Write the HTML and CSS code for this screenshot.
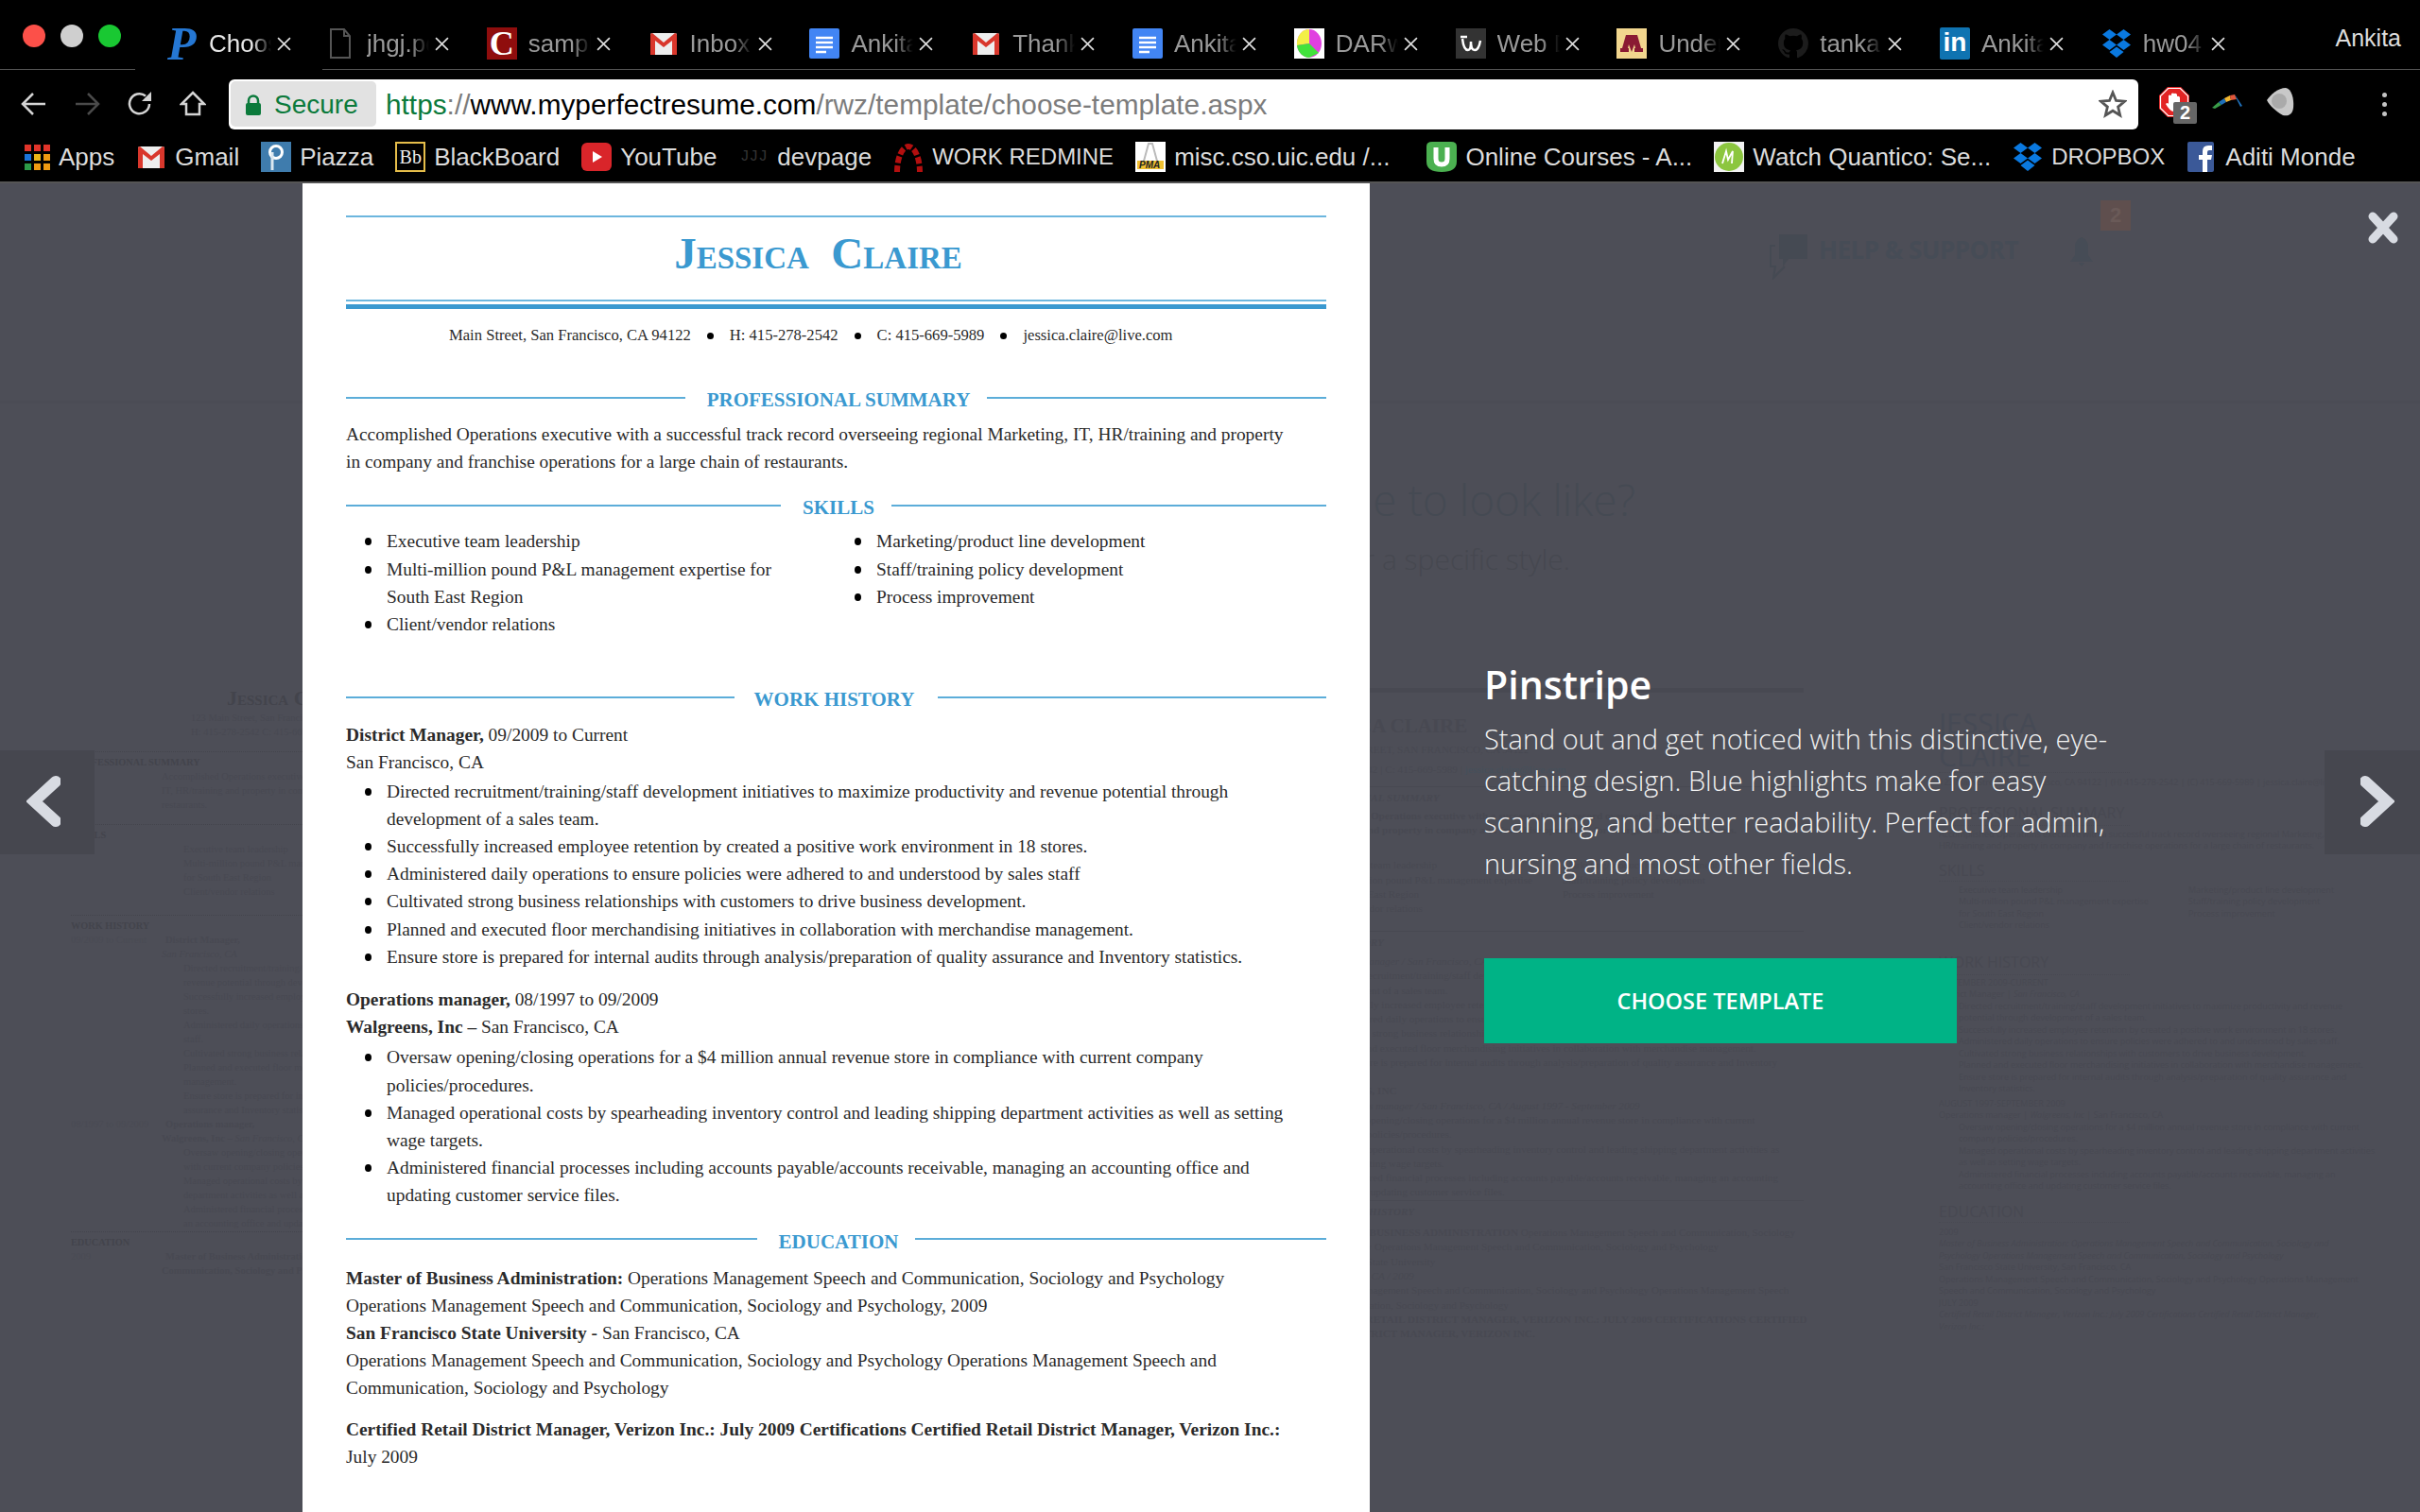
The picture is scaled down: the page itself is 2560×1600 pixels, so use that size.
FILE: index.html
```html
<!DOCTYPE html>
<html lang="en">
<head>
  <meta charset="UTF-8">
  <title>Choose Template</title>
  <link rel="stylesheet" href="styles.css">
</head>
<body>
  <!-- Browser chrome -->
  <header class="chrome">
    <div class="tabbar">
      <div class="lights">
        <span class="light red"></span>
        <span class="light grey"></span>
        <span class="light green"></span>
      </div>
      <div class="tab active">
        <span class="ico ico-p">P</span>
        <span class="tab-title">Choose</span>
        <svg class="tab-x" viewBox="0 0 14 14"><path d="M1 1L13 13M13 1L1 13"/></svg>
      </div>
      <div class="tab">
        <svg class="ico" viewBox="0 0 32 32"><path d="M8 1H20L26 8V31H6V1Z M20 1V8H26" fill="none" stroke="#555" stroke-width="2"/></svg>
        <span class="tab-title">jhgj.pdf</span>
        <svg class="tab-x" viewBox="0 0 14 14"><path d="M1 1L13 13M13 1L1 13"/></svg>
      </div>
      <div class="tab">
        <span class="ico ico-c">C</span>
        <span class="tab-title">sample</span>
        <svg class="tab-x" viewBox="0 0 14 14"><path d="M1 1L13 13M13 1L1 13"/></svg>
      </div>
      <div class="tab">
        <svg class="ico" viewBox="0 0 32 32"><use href="#gmail"/></svg>
        <span class="tab-title">Inbox</span>
        <svg class="tab-x" viewBox="0 0 14 14"><path d="M1 1L13 13M13 1L1 13"/></svg>
      </div>
      <div class="tab">
        <svg class="ico" viewBox="0 0 32 32"><use href="#docs"/></svg>
        <span class="tab-title">Ankita</span>
        <svg class="tab-x" viewBox="0 0 14 14"><path d="M1 1L13 13M13 1L1 13"/></svg>
      </div>
      <div class="tab">
        <svg class="ico" viewBox="0 0 32 32"><use href="#gmail"/></svg>
        <span class="tab-title">Thanks</span>
        <svg class="tab-x" viewBox="0 0 14 14"><path d="M1 1L13 13M13 1L1 13"/></svg>
      </div>
      <div class="tab">
        <svg class="ico" viewBox="0 0 32 32"><use href="#docs"/></svg>
        <span class="tab-title">Ankita</span>
        <svg class="tab-x" viewBox="0 0 14 14"><path d="M1 1L13 13M13 1L1 13"/></svg>
      </div>
      <div class="tab">
        <svg class="ico" viewBox="0 0 32 32">
          <rect width="32" height="32" fill="#fff"/>
          <ellipse cx="16" cy="16" rx="13" ry="15" fill="#e040e0"/>
          <path d="M16 1A13 15 0 0 0 3 18L16 16Z" fill="#f3f046"/>
          <path d="M3 18A13 15 0 0 0 16 31L26 26L16 16Z" fill="#41e23c"/>
        </svg>
        <span class="tab-title">DARwin</span>
        <svg class="tab-x" viewBox="0 0 14 14"><path d="M1 1L13 13M13 1L1 13"/></svg>
      </div>
      <div class="tab">
        <svg class="ico" viewBox="0 0 32 32">
          <rect width="32" height="32" fill="#333"/>
          <path d="M7 11C8 20 10 23 13 23C15 23 16 19 16 14C16 19 17 23 20 23C23 23 25 19 26 13M5 9H12" fill="none" stroke="#fff" stroke-width="2.5"/>
        </svg>
        <span class="tab-title">Web Dev</span>
        <svg class="tab-x" viewBox="0 0 14 14"><path d="M1 1L13 13M13 1L1 13"/></svg>
      </div>
      <div class="tab">
        <svg class="ico" viewBox="0 0 32 32">
          <rect width="32" height="32" fill="#f2d68e"/>
          <path d="M4 25V21H6L10 7H22L26 21H28V25H19V21H20L19 17L16 25L13 17L12 21H13V25Z" fill="#8a1a33"/>
        </svg>
        <span class="tab-title">Under</span>
        <svg class="tab-x" viewBox="0 0 14 14"><path d="M1 1L13 13M13 1L1 13"/></svg>
      </div>
      <div class="tab">
        <svg class="ico" viewBox="0 0 16 16"><path fill="#1c1c1c" d="M8 0C3.58 0 0 3.58 0 8c0 3.54 2.29 6.53 5.47 7.59.4.07.55-.17.55-.38 0-.19-.01-.82-.01-1.49-2.01.37-2.53-.49-2.69-.94-.09-.23-.48-.94-.82-1.13-.28-.15-.68-.52-.01-.53.63-.01 1.08.58 1.23.82.72 1.21 1.87.87 2.33.66.07-.52.28-.87.51-1.07-1.78-.2-3.64-.89-3.64-3.95 0-.87.31-1.59.82-2.15-.08-.2-.36-1.02.08-2.12 0 0 .67-.21 2.2.82.64-.18 1.32-.27 2-.27s1.36.09 2 .27c1.53-1.04 2.2-.82 2.2-.82.44 1.1.16 1.92.08 2.12.51.56.82 1.27.82 2.15 0 3.07-1.87 3.75-3.65 3.95.29.25.54.73.54 1.48 0 1.07-.01 1.93-.01 2.2 0 .21.15.46.55.38A8.01 8.01 0 0 0 16 8c0-4.42-3.58-8-8-8z"/></svg>
        <span class="tab-title">tanka</span>
        <svg class="tab-x" viewBox="0 0 14 14"><path d="M1 1L13 13M13 1L1 13"/></svg>
      </div>
      <div class="tab">
        <span class="ico ico-in">in</span>
        <span class="tab-title">Ankita</span>
        <svg class="tab-x" viewBox="0 0 14 14"><path d="M1 1L13 13M13 1L1 13"/></svg>
      </div>
      <div class="tab">
        <svg class="ico" viewBox="0 0 32 32"><use href="#dropbox"/></svg>
        <span class="tab-title">hw04</span>
        <svg class="tab-x" viewBox="0 0 14 14"><path d="M1 1L13 13M13 1L1 13"/></svg>
      </div>
      <span class="profile">Ankita</span>
    </div>

    <div class="toolbar">
      <div class="nav-btns">
        <svg class="nav-ico" viewBox="0 0 28 28"><path d="M26 14H3M13 3L2 14L13 25"/></svg>
        <svg class="nav-ico dim" viewBox="0 0 28 28"><path d="M2 14H25M15 3L26 14L15 25"/></svg>
        <svg class="nav-ico" viewBox="0 0 28 28"><path d="M24 14A10.500 10.500 0 1 1 20 5.500"/><path class="solid" d="M26 1V11H16Z"/></svg>
        <svg class="nav-ico" viewBox="0 0 28 28"><path d="M14 2L26 14H21V25H7V14H2Z"/></svg>
      </div>
      <div class="omnibox">
        <div class="secure">
          <svg class="lock" viewBox="0 0 16 22"><path d="M3 10V6.500A5 5 0 0 1 13 6.500V10" fill="none" stroke="#0b7a3b" stroke-width="2.500"/><rect y="9" width="16" height="13" rx="2" fill="#0b7a3b"/></svg>
          <span>Secure</span>
        </div>
        <div class="url"><span class="scheme">https</span><span class="path">://</span><span class="host">www.myperfectresume.com</span><span class="path">/rwz/template/choose-template.aspx</span></div>
        <svg class="star" viewBox="0 0 30 30"><path d="M15 3L18.500 11.500L27.500 12.200L20.600 18.100L22.700 27L15 22.200L7.300 27L9.400 18.100L2.500 12.200L11.500 11.500Z"/></svg>
      </div>
      <div class="extensions">
        <div class="ext-stop">
          <svg viewBox="0 0 32 32" class="ext-ico">
            <path d="M9 0H23L32 9V23L23 32H9L0 23V9Z" fill="#e32424"/>
            <path d="M1.500 9.600L9.600 1.500H22.400L30.500 9.600V22.400L22.400 30.500H9.600L1.500 22.400Z" fill="none" stroke="#fff" stroke-width="1.200"/>
            <path d="M10 16V9Q11.500 8 13 9V7Q14.500 6 16 7V7Q17.500 6 19 8V10Q20.500 9 22 11V20Q21 26 15 26Q11 25 7 18Q9 16 10 18Z" fill="#fff"/>
          </svg>
          <span class="ext-badge">2</span>
        </div>
        <svg class="ext-bow" viewBox="0 0 32 16">
          <path d="M0 15L7 9L10 12L3 16Z" fill="#3a9d4a"/>
          <path d="M7 9L13 5L15 9L10 12Z" fill="#1f6fb8"/>
          <path d="M13 5L19 2L20 7L15 9Z" fill="#f2b631"/>
          <path d="M19 2L24 1L26 6L20 7Z" fill="#e2573a"/>
          <path d="M24 1L32 13L30 14L26 6Z" fill="#1f6fb8"/>
        </svg>
        <svg class="ext-cloud" viewBox="0 0 32 32">
          <path d="M2 14C6 8 14 1 22 1C28 2 31 12 30 22C29 30 24 31 19 30C12 26 5 20 2 14Z" fill="#c8c8c8"/>
          <circle cx="15" cy="15" r="8" fill="#aaa"/>
        </svg>
        <div class="dots"><i></i><i></i><i></i></div>
      </div>
    </div>

    <div class="bookmarks">
      <div class="bm">
        <div class="apps-grid">
          <i class="c1"></i><i class="c1"></i><i class="c1"></i>
          <i class="c2"></i><i class="c3"></i><i class="c4"></i>
          <i class="c5"></i><i class="c4"></i><i class="c4"></i>
        </div>
        <span>Apps</span>
      </div>
      <div class="bm"><svg class="ico" viewBox="0 0 32 32"><use href="#gmail"/></svg><span>Gmail</span></div>
      <div class="bm">
        <svg class="ico" viewBox="0 0 32 32"><rect width="32" height="32" fill="#3f7cad"/><circle cx="16" cy="11" r="6.500" fill="none" stroke="#fff" stroke-width="3"/><path d="M12 11V30" stroke="#dce8f0" stroke-width="3"/></svg>
        <span>Piazza</span>
      </div>
      <div class="bm">
        <span class="ico ico-bb">Bb</span>
        <span>BlackBoard</span>
      </div>
      <div class="bm">
        <svg class="ico" viewBox="0 0 32 32"><rect y="1" width="32" height="30" rx="6" fill="#d9252a"/><path d="M12 10L22 16L12 22Z" fill="#fff"/></svg>
        <span>YouTube</span>
      </div>
      <div class="bm">
        <span class="ico ico-dev">JJJ</span>
        <span>devpage</span>
      </div>
      <div class="bm caps">
        <svg class="ico" viewBox="0 0 32 32"><path d="M4 32A12 27 0 0 1 28 32" fill="none" stroke="#b30f0f" stroke-width="6" stroke-dasharray="7 2.500"/></svg>
        <span>WORK REDMINE</span>
      </div>
      <div class="bm bm-wide">
        <svg class="ico" viewBox="0 0 32 32"><rect width="32" height="32" fill="#fff"/><path d="M8 24L14 2H18L24 24" fill="none" stroke="#bbb" stroke-width="2"/><rect x="2" y="20" width="28" height="9" fill="#f0c030"/><text x="4" y="28" class="pma">PMA</text></svg>
        <span>misc.cso.uic.edu /...</span>
      </div>
      <div class="bm">
        <svg class="ico" viewBox="0 0 32 32"><path d="M0 5Q0 0 6 0H26Q32 0 32 5V21Q32 32 16 32Q0 32 0 21Z" fill="#4bb050"/><path d="M10 6V18Q10 24 16 24Q22 24 22 18V6" fill="none" stroke="#fff" stroke-width="5"/></svg>
        <span>Online Courses - A...</span>
      </div>
      <div class="bm">
        <svg class="ico" viewBox="0 0 32 32"><rect width="32" height="32" fill="#f2f2f2"/><circle cx="16" cy="16" r="15" fill="#8cc63f"/><path d="M9 23L13 10L15 19L20 10L19 23" fill="none" stroke="#fff" stroke-width="1.800"/></svg>
        <span>Watch Quantico: Se...</span>
      </div>
      <div class="bm caps">
        <svg class="ico" viewBox="0 0 32 32"><use href="#dropbox"/></svg>
        <span>DROPBOX</span>
      </div>
      <div class="bm">
        <svg class="ico" viewBox="0 0 32 32"><rect x="1" width="28" height="32" rx="2" fill="#3b5998"/><path d="M22 32V19H26L27 14H22V11Q22 9 24 9H27V4H23Q17 4 17 10V14H13V19H17V32Z" fill="#fff"/></svg>
        <span>Aditi Monde</span>
      </div>
    </div>
  </header>

  <!-- Shared icons -->
  <svg class="defs" aria-hidden="true">
    <symbol id="gmail" viewBox="0 0 32 32">
      <rect x="2" y="5" width="28" height="23" rx="2" fill="#eee"/>
      <path d="M2 28V7Q2 5 4 5L16 15L28 5Q30 5 30 7V28H25V13L16 20L7 13V28Z" fill="#d9372c"/>
    </symbol>
    <symbol id="docs" viewBox="0 0 32 32">
      <rect width="32" height="32" rx="2" fill="#4285f4"/>
      <path d="M7 10H25M7 15H25M7 20H25M7 25H18" stroke="#fff" stroke-width="2.500"/>
    </symbol>
    <symbol id="dropbox" viewBox="0 0 32 32">
      <path d="M8.500 1L16 6.500L8.500 12L1 6.500Z M23.500 1L31 6.500L23.500 12L16 6.500Z M8.500 12L16 17.500L8.500 23L1 17.500Z M23.500 12L31 17.500L23.500 23L16 17.500Z M16 19.500L23.500 25L16 31L8.500 25Z" fill="#0a79e0"/>
    </symbol>
  </svg>

  <!-- Modal over the dimmed page -->
  <main class="stage">
    <div class="behind">
      <div class="ghost-top">
        <svg class="ghost-chat" viewBox="0 0 44 50"><path d="M12 2H42V28H22L16 36V28H12Z" fill="#454a53"/><path d="M8 14H3V36H8L6 48L18 36" fill="none" stroke="#454a53" stroke-width="2"/></svg>
        <span class="ghost-help">HELP &amp; SUPPORT</span>
        <svg class="ghost-bell" viewBox="0 0 32 32"><path d="M16 1Q22 3 23 10V20L28 27H4L9 20V10Q10 3 16 1ZM13 28H19L16 32Z" fill="#464c56"/></svg>
        <span class="ghost-badge">2</span>
      </div>
      <div class="ghost-rule"></div>
      <div class="ghost-title">your resume to look like?</div>
      <div class="ghost-sub">Or search for a specific style.</div>

      <div class="sheet sheet-left">
        <div class="sl-name">Jessica Claire</div>
        <div class="sl-center">123 Main Street, San Francisco, CA 94122</div>
        <div class="sl-center">H: 415-278-2542 C: 415-669-5989</div>
        <h4 class="sl-head">PROFESSIONAL SUMMARY</h4>
        <p class="sl-body">Accomplished Operations executive with a successful</p>
        <p class="sl-body">IT, HR/training and property in company and franchise</p>
        <p class="sl-body">restaurants.</p>
        <h4 class="sl-head">SKILLS</h4>
        <ul class="sl-list">
          <li>Executive team leadership</li>
          <li>Multi-million pound P&amp;L management expertise</li>
          <li class="cont">for South East Region</li>
          <li>Client/vendor relations</li>
        </ul>
        <h4 class="sl-head sl-work">WORK HISTORY</h4>
        <p class="sl-date"><span>09/2009 to Current</span><b>District Manager,</b></p>
        <p class="sl-body"><i>San Francisco, CA</i></p>
        <ul class="sl-list">
          <li>Directed recruitment/training/staff development</li>
          <li class="cont">revenue potential through development of a sales</li>
          <li>Successfully increased employee retention by</li>
          <li class="cont">stores.</li>
          <li>Administered daily operations to ensure policies</li>
          <li class="cont">staff.</li>
          <li>Cultivated strong business relationships with</li>
          <li>Planned and executed floor merchandising</li>
          <li class="cont">management.</li>
          <li>Ensure store is prepared for internal audits</li>
          <li class="cont">assurance and Inventory statistics.</li>
        </ul>
        <p class="sl-date"><span>08/1997 to 09/2009</span><b>Operations manager,</b></p>
        <p class="sl-body"><b>Walgreens, Inc –</b> <i>San Francisco, CA</i></p>
        <ul class="sl-list">
          <li>Oversaw opening/closing operations for a $4</li>
          <li class="cont">with current company policies/procedures.</li>
          <li>Managed operational costs by spearheading</li>
          <li class="cont">department activities as well as setting wage</li>
          <li>Administered financial processes including</li>
          <li class="cont">an accounting office and updating customer</li>
        </ul>
        <h4 class="sl-head sl-edu">EDUCATION</h4>
        <p class="sl-date"><span>2009</span><b>Master of Business Administration:</b></p>
        <p class="sl-body"><b>Communication, Sociology and Psychology</b></p>
      </div>

      <div class="sheet sheet-mid">
        <div class="sm-bar"></div>
        <div class="sm-name">JESSICA CLAIRE</div>
        <div class="sm-addr">123 MAIN STREET, SAN FRANCISCO, CA 94122</div>
        <div class="sm-phone">H: 415-278-2542 | C: 415-669-5989 | <span class="sm-mail">jessica.claire@live.com</span></div>
        <div class="sm-rule"></div>
        <div class="sm-head"><b><i>PROFESSIONAL SUMMARY</i></b></div>
        <div class="sm-summary"><b>Accomplished Operations executive with a successful track record overseeing regional IT,</b></div>
        <div><b>HR/training and property in company and franchise operations for a large chain of restaurants.</b></div>
        <div class="sm-cols">
          <div>
            <div class="sm-item">Executive team leadership</div>
            <div class="sm-item">Multi-million pound P&amp;L management expertise</div>
            <div class="sm-item">for South East Region</div>
            <div class="sm-item">Client/vendor relations</div>
          </div>
          <div>
            <div class="sm-item">Marketing/product line development</div>
            <div class="sm-item">Staff/training policy development</div>
            <div class="sm-item">Process improvement</div>
          </div>
        </div>
        <div class="sm-rule sm-rule-low"></div>
        <div class="sm-head"><b><i>WORK HISTORY</i></b></div>
        <div class="sm-role"><i>District Manager / San Francisco, CA / September 2009 - Current</i></div>
        <div class="sm-item">Directed recruitment/training/staff development initiatives to maximize</div>
        <div class="sm-item">development of a sales team.</div>
        <div class="sm-item">Successfully increased employee retention by created a positive work</div>
        <div class="sm-item">Administered daily operations to ensure policies were adhered to</div>
        <div class="sm-item">Cultivated strong business relationships with customers</div>
        <div class="sm-item">Planned and executed floor merchandising initiatives in collaboration with merchandise management.</div>
        <div class="sm-item">Ensure store is prepared for internal audits through analysis/preparation of quality assurance and Inventory</div>
        <div class="sm-head sm-company"><b>WALGREENS, INC</b></div>
        <div class="sm-item"><i>Operations manager / San Francisco, CA / August 1997 - September 2009</i></div>
        <div class="sm-item">Oversaw opening/closing operations for a $4 million annual revenue store in compliance with current</div>
        <div class="sm-item">company policies/procedures.</div>
        <div class="sm-item">Managed operational costs by spearheading inventory control and leading shipping department activities as</div>
        <div class="sm-item">well as setting wage targets.</div>
        <div class="sm-item">Administered financial processes including accounts payable/accounts receivable, managing an accounting</div>
        <div class="sm-item">office and updating customer service files.</div>
        <div class="sm-rule sm-rule-tight"></div>
        <div class="sm-head"><b><i>EDUCATION HISTORY</i></b></div>
        <div class="sm-degree"><b>MASTER OF BUSINESS ADMINISTRATION</b> Operations Management Speech and Communication, Sociology</div>
        <div>and Psychology Operations Management Speech and Communication, Sociology and Psychology</div>
        <div>San Francisco State University</div>
        <div><i>San Francisco, CA / 2009</i></div>
        <div>Operations Management Speech and Communication, Sociology and Psychology Operations Management Speech</div>
        <div>and Communication, Sociology and Psychology</div>
        <div><b>CERTIFIED RETAIL DISTRICT MANAGER, VERIZON INC.: JULY 2009 CERTIFICATIONS CERTIFIED</b></div>
        <div><b>RETAIL DISTRICT MANAGER, VERIZON INC.</b></div>
      </div>

      <div class="sheet sheet-right">
        <div class="sr-name">JESSICA<br>CLAIRE</div>
        <div class="sr-contact">123 Main Street, San Francisco, CA 94122 | (H) 415-278-2542 | (C) 415-669-5989 | jessica.claire@live.com</div>
        <div class="sr-head">PROFESSIONAL SUMMARY</div>
        <div>Accomplished Operations executive with a successful track record overseeing regional Marketing, IT,</div>
        <div>HR/training and property in company and franchise operations for a large chain of restaurants.</div>
        <div class="sr-head sr-skills">SKILLS</div>
        <div class="sr-cols">
          <div>
            <div class="sr-item">Executive team leadership</div>
            <div class="sr-item">Multi-million pound P&amp;L management expertise</div>
            <div class="sr-item">for South East Region</div>
            <div class="sr-item">Client/vendor relations</div>
          </div>
          <div>
            <div class="sr-item">Marketing/product line development</div>
            <div class="sr-item">Staff/training policy development</div>
            <div class="sr-item">Process improvement</div>
          </div>
        </div>
        <div class="sr-head sr-work">WORK HISTORY</div>
        <div>SEPTEMBER 2009-CURRENT</div>
        <div>District Manager | <i>San Francisco, CA</i></div>
        <div class="sr-item">Directed recruitment/training/staff development initiatives to maximize productivity and revenue</div>
        <div class="sr-item">potential through development of a sales team.</div>
        <div class="sr-item">Successfully increased employee retention by created a positive work environment in 18 stores.</div>
        <div class="sr-item">Administered daily operations to ensure policies were adhered to and understood by sales staff.</div>
        <div class="sr-item">Cultivated strong business relationships with customers to drive business development.</div>
        <div class="sr-item">Planned and executed floor merchandising initiatives in collaboration with merchandise management.</div>
        <div class="sr-item">Ensure store is prepared for internal audits through analysis/preparation of quality assurance and</div>
        <div class="sr-item">Inventory statistics.</div>
        <div class="sr-job">AUGUST 1997-SEPTEMBER 2009</div>
        <div>Operations manager | <i>Walgreens, Inc</i> | San Francisco, CA</div>
        <div class="sr-item">Oversaw opening/closing operations for a $4 million annual revenue store in compliance with current</div>
        <div class="sr-item">company policies/procedures.</div>
        <div class="sr-item">Managed operational costs by spearheading inventory control and leading shipping department activities</div>
        <div class="sr-item">as well as setting wage targets.</div>
        <div class="sr-item">Administered financial processes including accounts payable/accounts receivable, managing an</div>
        <div class="sr-item">accounting office and updating customer service files.</div>
        <div class="sr-head sr-edu">EDUCATION</div>
        <div>2009</div>
        <div><i>Master of Business Administration: Operations Management Speech and Communication, Sociology and</i></div>
        <div><i>Psychology Operations Management Speech and Communication, Sociology and Psychology</i></div>
        <div>San Francisco State University, San Francisco, CA</div>
        <div>Operations Management Speech and Communication, Sociology and Psychology Operations Management</div>
        <div>Speech and Communication, Sociology and Psychology</div>
        <div>JULY 2009</div>
        <div><i>Certified Retail District Manager, Verizon Inc.: July 2009 Certifications Certified Retail District Manager,</i></div>
        <div><i>Verizon Inc.:</i></div>
      </div>
    </div>

    <div class="modal">
      <article class="paper">
        <div class="rule-top"></div>
        <h1 class="res-name">Jessica&nbsp; Claire</h1>
        <div class="rule-double"></div>
        <div class="contact">
          <span>Main Street, San Francisco, CA 94122</span>
          <i class="dot"></i>
          <span>H: 415-278-2542</span>
          <i class="dot"></i>
          <span>C: 415-669-5989</span>
          <i class="dot"></i>
          <span>jessica.claire@live.com</span>
        </div>

        <h2 class="sec-head first"><span>PROFESSIONAL SUMMARY</span></h2>
        <p class="sec-text">Accomplished Operations executive with a successful track record overseeing regional Marketing, IT, HR/training and property<br>in company and franchise operations for a large chain of restaurants.</p>

        <h2 class="sec-head skills"><span>SKILLS</span></h2>
        <div class="skill-cols">
          <ul class="res-list">
            <li>Executive team leadership</li>
            <li>Multi-million pound P&amp;L management expertise for South East Region</li>
            <li>Client/vendor relations</li>
          </ul>
          <ul class="res-list">
            <li>Marketing/product line development</li>
            <li>Staff/training policy development</li>
            <li>Process improvement</li>
          </ul>
        </div>

        <h2 class="sec-head work"><span>WORK HISTORY</span></h2>
        <p class="sec-text job"><b>District Manager,</b> 09/2009 to Current<br>San Francisco, CA</p>
        <ul class="res-list">
          <li>Directed recruitment/training/staff development initiatives to maximize productivity and revenue potential through development of a sales team.</li>
          <li>Successfully increased employee retention by created a positive work environment in 18 stores.</li>
          <li>Administered daily operations to ensure policies were adhered to and understood by sales staff</li>
          <li>Cultivated strong business relationships with customers to drive business development.</li>
          <li>Planned and executed floor merchandising initiatives in collaboration with merchandise management.</li>
          <li>Ensure store is prepared for internal audits through analysis/preparation of quality assurance and Inventory statistics.</li>
        </ul>
        <p class="sec-text job second"><b>Operations manager,</b> 08/1997 to 09/2009<br><b>Walgreens, Inc –</b> San Francisco, CA</p>
        <ul class="res-list second-list">
          <li>Oversaw opening/closing operations for a $4 million annual revenue store in compliance with current company policies/procedures.</li>
          <li>Managed operational costs by spearheading inventory control and leading shipping department activities as well as setting wage targets.</li>
          <li>Administered financial processes including accounts payable/accounts receivable, managing an accounting office and updating customer service files.</li>
        </ul>

        <h2 class="sec-head edu"><span>EDUCATION</span></h2>
        <p class="sec-text edu-text"><b>Master of Business Administration:</b> Operations Management Speech and Communication, Sociology and Psychology<br>Operations Management Speech and Communication, Sociology and Psychology, 2009<br><b>San Francisco State University -</b> San Francisco, CA<br>Operations Management Speech and Communication, Sociology and Psychology Operations Management Speech and<br>Communication, Sociology and Psychology</p>
        <p class="sec-text cert"><b>Certified Retail District Manager, Verizon Inc.: July 2009 Certifications Certified Retail District Manager, Verizon Inc.:</b><br>July 2009</p>
      </article>

      <section class="info">
        <h3 class="info-title">Pinstripe</h3>
        <p class="info-text">Stand out and get noticed with this distinctive, eye-catching design. Blue highlights make for easy scanning, and better readability. Perfect for admin, nursing and most other fields.</p>
        <button class="choose-btn">CHOOSE TEMPLATE</button>
      </section>
    </div>

    <div class="arrow arrow-left"><svg viewBox="0 0 36 54"><path d="M31 6L8 27L31 48"/></svg></div>
    <div class="arrow arrow-right"><svg viewBox="0 0 36 54"><path d="M5 6L28 27L5 48"/></svg></div>
    <svg class="close" viewBox="0 0 34 34"><path d="M6 5L28 29M28 5L6 29"/></svg>
  </main>
</body>
</html>
```

FILE: styles.css
```css
* {
  margin: 0;
  padding: 0;
  box-sizing: border-box;
}
html, body {
  width: 2560px;
  height: 1600px;
  overflow: hidden;
}
body {
  font-family: "Liberation Sans", Arial, sans-serif;
  background-color: #000;
}
.defs {
  position: absolute;
  width: 0;
  height: 0;
}

/* Browser chrome */
.chrome {
  height: 194px;
  background-color: #000;
  border-bottom: 2px solid #555;
}
.tabbar {
  display: flex;
  height: 74px;
  border-bottom: 1px solid #555;
}
.lights {
  display: flex;
  gap: 16px;
  width: 143px;
  padding: 26px 0 0 24px;
}
.light {
  width: 24px;
  height: 24px;
  border-radius: 50%;
}
.light.red { background-color: #fc5049; }
.light.grey { background-color: #cfcfcf; }
.light.green { background-color: #19c832; }
.tab {
  display: flex;
  align-items: center;
  flex: none;
  width: 170.8px;
  height: 74px;
  padding: 18px 0 0 3px;
}
.tab.active {
  width: 198px;
  padding-left: 34px;
  background-color: #000;
}
.ico {
  display: block;
  flex: none;
  width: 32px;
  height: 32px;
}
.tab .ico {
  height: 34px;
}
.tab-title {
  width: 66px;
  margin-left: 12px;
  overflow: hidden;
  white-space: nowrap;
  font-size: 26px;
  color: #9a9a9a;
  -webkit-mask-image: linear-gradient(to right, #000 70%, transparent 100%);
  mask-image: linear-gradient(to right, #000 70%, transparent 100%);
}
.tab.active .tab-title {
  color: #e8e8e8;
}
.tab-x {
  flex: none;
  width: 15px;
  height: 15px;
  margin: 1px 0 0 6px;
  fill: none;
  stroke: #ddd;
  stroke-width: 1.6;
}
.ico-p {
  font-family: "Liberation Serif", serif;
  font-style: italic;
  font-weight: bold;
  font-size: 50px;
  line-height: 34px;
  color: #2577d3;
}
.ico-c {
  font-family: "Liberation Serif", serif;
  font-weight: bold;
  font-size: 36px;
  line-height: 34px;
  text-align: center;
  color: #fff;
  background-color: #8f0d0d;
}
.ico-in {
  height: 32px;
  font-weight: bold;
  font-size: 28px;
  line-height: 32px;
  text-align: center;
  color: #fff;
  background-color: #0f73b1;
  border-radius: 2px;
}
.profile {
  margin-left: auto;
  padding: 26px 20px 0 0;
  font-size: 25px;
  color: #ddd;
}

.toolbar {
  display: flex;
  height: 70px;
  align-items: center;
  padding-top: 2px;
}
.nav-btns {
  display: flex;
  gap: 28px;
  width: 242px;
  padding-left: 22px;
}
.nav-ico {
  width: 28px;
  height: 28px;
  fill: none;
  stroke: #d4d4d4;
  stroke-width: 2.5;
}
.nav-ico.dim {
  stroke: #4a4a4a;
}
.nav-ico .solid {
  fill: #d4d4d4;
  stroke: none;
}
.omnibox {
  display: flex;
  align-items: center;
  width: 2020px;
  height: 53px;
  padding-left: 2px;
  background-color: #fff;
  border-radius: 6px;
}
.secure {
  display: flex;
  align-items: center;
  gap: 14px;
  width: 154px;
  height: 48px;
  padding: 2px 0 0 16px;
  font-size: 28px;
  color: #0b7a3b;
  background-color: #e2e2e2;
  border-radius: 5px;
}
.lock {
  width: 16px;
  height: 22px;
}
.url {
  flex: 1;
  margin-left: 10px;
  padding-top: 2px;
  font-size: 29.8px;
  white-space: nowrap;
}
.url .scheme { color: #0b7a3b; }
.url .host { color: #000; }
.url .path { color: #7c7c7c; }
.star {
  width: 30px;
  height: 30px;
  margin-right: 12px;
  fill: none;
  stroke: #555;
  stroke-width: 2.8;
}
.extensions {
  display: flex;
  align-items: center;
  flex: 1;
  padding-left: 22px;
}
.ext-stop {
  position: relative;
  width: 32px;
  height: 32px;
  margin-top: -4px;
}
.ext-ico {
  display: block;
  width: 32px;
  height: 32px;
}
.ext-badge {
  position: absolute;
  left: 15px;
  top: 16px;
  width: 25px;
  height: 23px;
  font-size: 20px;
  font-weight: bold;
  line-height: 23px;
  text-align: center;
  color: #fff;
  background-color: #666;
  border-radius: 2px;
}
.ext-bow {
  width: 32px;
  height: 16px;
  margin: -6px 0 0 24px;
}
.ext-cloud {
  width: 32px;
  height: 32px;
  margin: -4px 0 0 24px;
}
.dots {
  display: flex;
  flex-direction: column;
  gap: 5px;
  margin-left: 92px;
}
.dots i {
  width: 5px;
  height: 5px;
  background-color: #c4c4c4;
  border-radius: 50%;
}

.bookmarks {
  display: flex;
  gap: 23px;
  align-items: center;
  height: 44px;
  padding-left: 26px;
}
.bm {
  display: flex;
  align-items: center;
  gap: 9px;
  flex: none;
  font-size: 26px;
  color: #dcdcdc;
}
.bm.caps {
  font-size: 24px;
}
.bm-wide {
  margin-right: 16px;
}
.apps-grid {
  display: grid;
  grid-template-columns: repeat(3, 7px);
  grid-auto-rows: 7px;
  gap: 3px;
}
.apps-grid .c1 { background-color: #e0342a; }
.apps-grid .c2 { background-color: #1a73d8; }
.apps-grid .c3 { background-color: #e9b516; }
.apps-grid .c4 { background-color: #ef9a12; }
.apps-grid .c5 { background-color: #2c9a48; }
.ico-bb {
  height: 32px;
  font-family: "Liberation Serif", serif;
  font-size: 20px;
  line-height: 28px;
  text-align: center;
  color: #eee;
  border: 2px solid #e5bd4a;
}
.ico-dev {
  font-family: "Liberation Mono", monospace;
  font-size: 16px;
  line-height: 32px;
  text-align: center;
  color: #333;
}
.pma {
  font-size: 10px;
  font-weight: bold;
  font-style: italic;
  fill: #222;
}

/* Dimmed page */
.stage {
  position: relative;
  height: 1406px;
  overflow: hidden;
  background-color: #4d4e57;
}
.behind {
  position: absolute;
  inset: 0;
}
.ghost-top {
  position: absolute;
  left: 1870px;
  top: 16px;
  width: 390px;
  height: 90px;
}
.ghost-chat {
  position: absolute;
  left: 0;
  top: 36px;
  width: 44px;
  height: 50px;
}
.ghost-help {
  position: absolute;
  left: 54px;
  top: 36px;
  font-family: "Open Sans", sans-serif;
  font-weight: 700;
  font-size: 26px;
  letter-spacing: -0.5px;
  color: #464c56;
  white-space: nowrap;
}
.ghost-bell {
  position: absolute;
  left: 316px;
  top: 40px;
  width: 32px;
  height: 32px;
}
.ghost-badge {
  position: absolute;
  left: 352px;
  top: 2px;
  width: 32px;
  height: 32px;
  font-size: 22px;
  font-weight: bold;
  line-height: 32px;
  text-align: center;
  color: #6a5a58;
  background-color: #5f4f4e;
}
.ghost-rule {
  position: absolute;
  left: 0;
  right: 0;
  top: 230px;
  height: 3px;
  background-color: #4b4c55;
}
.ghost-title, .ghost-sub {
  position: absolute;
  right: 830px;
  font-family: "Open Sans", sans-serif;
  font-weight: 300;
  white-space: nowrap;
  color: #454a53;
}
.ghost-title {
  top: 303px;
  font-size: 46px;
}
.ghost-sub {
  right: 899px;
  top: 377px;
  font-size: 30px;
  color: #464850;
}
.sheet {
  position: absolute;
  white-space: nowrap;
  color: #484952;
}
.sheet p, .sheet li {
  list-style: none;
}

.sheet-left {
  left: 75px;
  top: 532px;
  width: 245px;
  overflow: hidden;
  font-family: "Liberation Serif", serif;
  font-size: 10.5px;
  line-height: 15px;
}
.sl-name {
  width: 245px;
  padding-left: 165px;
  font-weight: bold;
  font-size: 22px;
  line-height: 26px;
  font-variant: small-caps;
  color: #43444c;
}
.sl-center {
  padding-left: 127px;
}
.sl-head {
  margin-top: 13px;
  padding-top: 3px;
  border-top: 1px dotted #43444c;
  font-size: 10.3px;
  line-height: 15px;
  color: #43444c;
}
.sl-work {
  margin-top: 17px;
}
.sl-edu {
  margin-top: 1px;
}
.sl-body {
  padding-left: 96px;
}
.sl-list {
  padding-left: 119px;
}
.sl-date {
  display: flex;
}
.sl-date span {
  width: 100px;
  flex: none;
  color: #4a4b54;
}

.sheet-mid {
  left: 1380px;
  top: 534px;
  width: 540px;
  overflow: hidden;
  font-family: "Liberation Serif", serif;
  font-size: 11.2px;
  line-height: 15.3px;
}
.sm-bar {
  width: 528px;
  height: 5px;
  background-color: #484952;
}
.sm-name {
  margin-top: 22px;
  padding-left: 0;
  font-weight: bold;
  font-size: 21px;
  line-height: 26px;
}
.sm-addr { margin-top: 5px; }
.sm-phone { margin-top: 6px; }
.sm-rule {
  width: 528px;
  height: 1px;
  margin-top: 9px;
  background-color: #484952;
}
.sm-rule-low { margin-top: 15px; }
.sm-rule-tight { margin-top: 0; }
.sm-head { margin-top: 4px; }
.sm-company { margin-top: 15px; }
.sm-summary { margin-top: 4px; }
.sm-mail { color: #44505c; }
.sm-cols {
  display: flex;
  gap: 10px;
  margin-top: 22px;
}
.sm-item { padding-left: 22px; }
.sm-role { margin-top: 5px; padding-left: 22px; }
.sm-degree { margin-top: 7px; }

.sheet-right {
  left: 2051px;
  top: 553px;
  width: 509px;
  overflow: hidden;
  font-family: "Open Sans", sans-serif;
  font-size: 9px;
  line-height: 12.5px;
}
.sr-name {
  width: 202px;
  padding-bottom: 0;
  border-bottom: 1px dotted #484952;
  font-size: 30px;
  line-height: 35px;
  color: #464a55;
}
.sr-contact { margin-top: 4px; }
.sr-head {
  width: 202px;
  margin: 15px 0 3px;
  padding-bottom: 3px;
  border-bottom: 1px dotted #484952;
  font-size: 16px;
  line-height: 20px;
}
.sr-skills { margin-top: 9px; padding-bottom: 1px; }
.sr-work { margin: 22px 0 2px; }
.sr-edu { margin: 10px 0 4px; padding-bottom: 1px; }
.sr-job { margin-top: 3px; }
.sr-item { padding-left: 21px; }
.sr-cols { display: flex; }
.sr-cols > div:first-child { width: 243px; }

/* Resume preview */
.modal {
  position: relative;
  display: flex;
  height: 1406px;
  padding-left: 320px;
}
.paper {
  flex: none;
  width: 1129px;
  padding: 34px 46px 0;
  overflow: hidden;
  font-family: "Liberation Serif", serif;
  font-size: 19.4px;
  line-height: 29.2px;
  color: #2a2a2a;
  background-color: #fff;
}
.rule-top {
  height: 2px;
  background-color: #6cb6de;
}
.res-name {
  margin-top: 13px;
  padding-right: 38px;
  font-size: 47px;
  line-height: 50px;
  font-weight: bold;
  font-variant: small-caps;
  text-align: center;
  color: #3a99d0;
}
.rule-double {
  height: 10px;
  margin-top: 24px;
  border-top: 2px solid #6cb6de;
  border-bottom: 5px solid #3a99d0;
}
.contact {
  display: flex;
  align-items: center;
  gap: 17px;
  margin-top: 15px;
  padding-left: 109px;
  font-size: 16.6px;
  line-height: 26px;
}
.dot {
  width: 7px;
  height: 7px;
  background-color: #000;
  border-radius: 50%;
}
.sec-head {
  display: flex;
  align-items: center;
  gap: 20px;
  font-size: 21px;
  line-height: 26px;
  font-weight: bold;
  color: #3a99d0;
}
.sec-head span {
  margin: 0 -2px 0 3px;
}
.sec-head.work span {
  margin: 0 5px 0 1px;
}
.sec-head::before, .sec-head::after {
  content: "";
  flex: 1;
  height: 2px;
  margin-top: -5px;
  background-color: #5cadd9;
}
.sec-head.first { margin-top: 42px; }
.sec-head.skills { margin-top: 21px; }
.sec-head.work { margin-top: 52px; }
.sec-head.edu { margin-top: 21px; }
.sec-text {
  margin-top: 9px;
}
.skill-cols {
  display: grid;
  grid-template-columns: 518px 1fr;
  margin-top: 8px;
}
.res-list {
  list-style: none;
  padding: 0 35px 0 43px;
}
.res-list li {
  position: relative;
}
.res-list li::before {
  content: "";
  position: absolute;
  left: -23px;
  top: 11px;
  width: 7px;
  height: 8px;
  background-color: #000;
  border-radius: 50%;
}
.skill-cols .res-list {
  padding-right: 50px;
}
.job { margin-top: 10px; }
.job + .res-list { margin-top: 1px; }
.job.second { margin-top: 16px; }
.job.second + .second-list { margin-top: 3px; }
.edu-text { margin-top: 11px; }
.cert { margin-top: 14.5px; }

/* Template info */
.info {
  padding: 500px 0 0 121px;
  color: #fff;
  font-family: "Open Sans", sans-serif;
}
.info-title {
  font-size: 41px;
  line-height: 60px;
  font-weight: 600;
}
.info-text {
  width: 670px;
  margin-top: 6px;
  font-size: 29px;
  line-height: 44px;
  font-weight: 300;
  color: #f2f2f2;
}
.choose-btn {
  display: block;
  width: 500px;
  height: 90px;
  margin-top: 78px;
  font-family: "Open Sans", sans-serif;
  font-size: 23.5px;
  font-weight: 600;
  color: #fff;
  background-color: #00b386;
  border: none;
}
.arrow {
  position: absolute;
  top: 600px;
  display: flex;
  align-items: center;
  width: 101px;
  height: 110px;
  padding-bottom: 3px;
  background-color: #46474f;
}
.arrow-left { left: 0; width: 100px; padding-left: 28px; }
.arrow-right { right: 0; padding-left: 38px; }
.arrow svg {
  width: 36px;
  height: 54px;
  fill: none;
  stroke: #d8dbe2;
  stroke-width: 12;
  stroke-linecap: round;
  stroke-linejoin: miter;
}
.close {
  position: absolute;
  left: 2504px;
  top: 30px;
  width: 34px;
  height: 34px;
  fill: none;
  stroke: #d8dbe2;
  stroke-width: 9;
  stroke-linecap: round;
}
```
